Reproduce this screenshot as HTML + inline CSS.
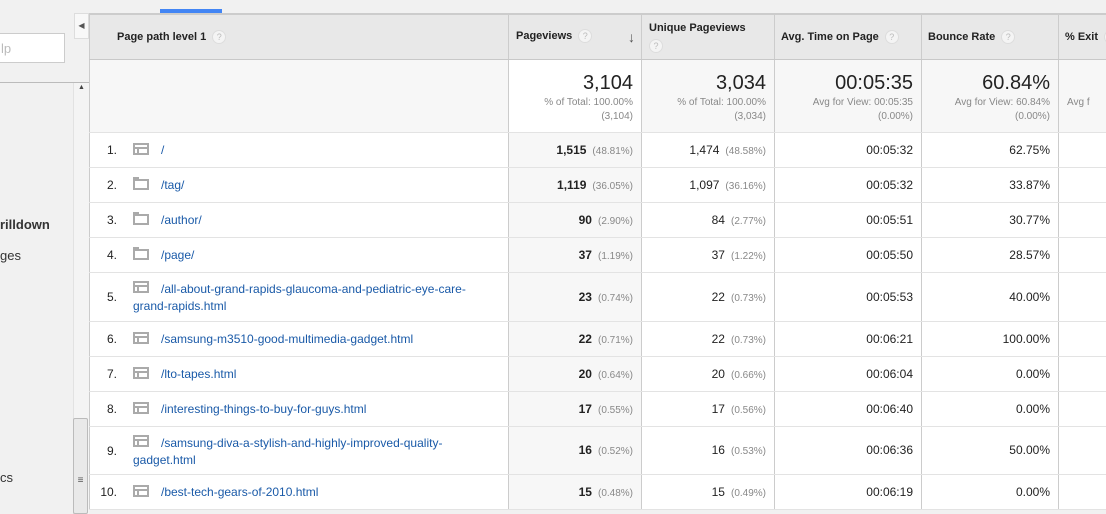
<!DOCTYPE html>
<html><head><meta charset="utf-8"><style>
*{margin:0;padding:0;box-sizing:border-box}
body{width:1106px;height:514px;overflow:hidden;background:#f1f1f1;font-family:"Liberation Sans",Arial,sans-serif;position:relative;color:#222}
.abs{position:absolute}
table{position:absolute;left:89px;top:13px;width:1029px;border-collapse:collapse;table-layout:fixed;background:#fff;font-size:12px}
td,th{border-left:1px solid #ccc;border-bottom:1px solid #e3e3e3;vertical-align:middle}
th{background:#e8e8e8;height:45px;font-size:11px;font-weight:bold;text-align:left;padding:0 6px;border-top:2px solid #ccc;border-bottom:1px solid #c8c8c8;color:#222;white-space:nowrap;overflow:hidden}
.q{display:inline-block;width:14px;height:14px;border-radius:50%;background:#f4f4f4;border:1px solid #ddd;color:#bbb;font-size:9px;text-align:center;line-height:12px;font-weight:normal;vertical-align:middle;margin-left:6px}
.sum td{height:73px;text-align:right;padding:0 8px;vertical-align:top;padding-top:11px}
.sum .big{font-size:20px;color:#222;line-height:24px}
.sum .sm{font-size:10px;color:#888;line-height:14px;margin-top:1px}
.r td{text-align:right;padding-right:8px;color:#222}
.r td.p{text-align:left;padding:0;vertical-align:top}
.w{position:relative;height:34px}
.n{position:absolute;left:0;width:27px;text-align:right}
.ic{position:absolute;left:43px;width:16px;height:12px;border:2px solid #aaa}
.ic.pg:after{content:"";position:absolute;left:0;top:2px;width:12px;height:0;border-top:2px solid #aaa}
.ic.pg:before{content:"";position:absolute;left:2px;top:2px;width:0;height:6px;border-left:2px solid #aaa}
.ic.fd{height:11px}
.ic.fd:before{content:"";position:absolute;left:-2px;top:-4px;width:6px;height:2px;background:#aaa}
.lk{color:#1a5aa8;position:absolute;left:71px;line-height:17px;white-space:nowrap}
.lk.wr{white-space:normal}
.pv{background:#f7f7f7}
.pct{color:#888;font-size:10px;margin-left:6px}
b{font-weight:bold}
</style></head><body>
<div class="abs" style="left:160px;top:9px;width:62px;height:4px;background:#4285f4"></div>
<div class="abs" style="left:-5px;top:33px;width:70px;height:30px;background:#fff;border:1px solid #ccc;color:#bbb;font-size:13px;padding:7px 0 0 5px">lp</div>
<div class="abs" style="left:0;top:82px;width:89px;height:1px;background:#bbb"></div>
<div class="abs" style="left:74px;top:13px;width:15px;height:26px;background:#f8f8f8;border:1px solid #ddd;font-size:8px;color:#555;text-align:center;line-height:24px">◀</div>
<div class="abs" style="left:73px;top:83px;width:16px;height:431px;background:#f4f4f4;border-left:1px solid #e2e2e2"></div>
<div class="abs" style="left:78px;top:84px;font-size:7px;color:#444">▲</div>
<div class="abs" style="left:73px;top:418px;width:15px;height:96px;background:#e9e9e9;border:1px solid #bbb;border-radius:2px;font-size:10px;color:#555;text-align:center;padding-top:56px">≡</div>
<div class="abs" style="left:0;top:217px;font-size:13px;font-weight:bold;color:#333">rilldown</div>
<div class="abs" style="left:0;top:248px;font-size:13px;color:#333">ges</div>
<div class="abs" style="left:0;top:470px;font-size:13px;color:#333">cs</div>
<table>
<colgroup><col style="width:419px"><col style="width:133px"><col style="width:133px"><col style="width:147px"><col style="width:137px"><col style="width:60px"></colgroup>
<tr><th style="padding-left:27px">Page path level 1<span class="q">?</span></th><th style="padding-left:7px">Pageviews<span class="q">?</span><span style="float:right;font-size:14px;color:#555">↓</span></th><th style="padding-left:7px;vertical-align:top;padding-top:6px;line-height:14px">Unique Pageviews<br><span class="q" style="margin:4px 0 0">?</span></th><th>Avg. Time on Page<span class="q">?</span></th><th>Bounce Rate<span class="q">?</span></th><th>% Exit<span class="q">?</span></th></tr>
<tr class="sum"><td style="background:#f7f7f7"></td><td><div class="big">3,104</div><div class="sm">% of Total: 100.00%<br>(3,104)</div></td><td style="background:#f7f7f7"><div class="big">3,034</div><div class="sm">% of Total: 100.00%<br>(3,034)</div></td><td style="background:#f7f7f7"><div class="big">00:05:35</div><div class="sm">Avg for View: 00:05:35<br>(0.00%)</div></td><td style="background:#f7f7f7"><div class="big">60.84%</div><div class="sm">Avg for View: 60.84%<br>(0.00%)</div></td><td style="background:#f7f7f7;text-align:left"><div class="big">&nbsp;</div><div class="sm">Avg f</div></td></tr>
<tr class="r" style="height:35px"><td class="p"><div class="w"><span class="n" style="top:10px">1.</span><span class="ic pg" style="top:10px"></span><span class="lk" style="top:9px">/</span></div></td><td class="pv"><b>1,515</b><span class="pct">(48.81%)</span></td><td>1,474<span class="pct">(48.58%)</span></td><td>00:05:32</td><td>62.75%</td><td></td></tr>
<tr class="r" style="height:35px"><td class="p"><div class="w"><span class="n" style="top:10px">2.</span><span class="ic fd" style="top:11px"></span><span class="lk" style="top:9px">/tag/</span></div></td><td class="pv"><b>1,119</b><span class="pct">(36.05%)</span></td><td>1,097<span class="pct">(36.16%)</span></td><td>00:05:32</td><td>33.87%</td><td></td></tr>
<tr class="r" style="height:35px"><td class="p"><div class="w"><span class="n" style="top:10px">3.</span><span class="ic fd" style="top:11px"></span><span class="lk" style="top:9px">/author/</span></div></td><td class="pv"><b>90</b><span class="pct">(2.90%)</span></td><td>84<span class="pct">(2.77%)</span></td><td>00:05:51</td><td>30.77%</td><td></td></tr>
<tr class="r" style="height:35px"><td class="p"><div class="w"><span class="n" style="top:10px">4.</span><span class="ic fd" style="top:11px"></span><span class="lk" style="top:9px">/page/</span></div></td><td class="pv"><b>37</b><span class="pct">(1.19%)</span></td><td>37<span class="pct">(1.22%)</span></td><td>00:05:50</td><td>28.57%</td><td></td></tr>
<tr class="r" style="height:49px"><td class="p"><div class="w" style="height:48px"><span class="n" style="top:17px">5.</span><span class="ic pg" style="top:8px"></span><span class="lk wr" style="top:8px;left:43px;text-indent:28px;width:355px">/all-about-grand-rapids-glaucoma-and-pediatric-eye-care-grand-rapids.html</span></div></td><td class="pv"><b>23</b><span class="pct">(0.74%)</span></td><td>22<span class="pct">(0.73%)</span></td><td>00:05:53</td><td>40.00%</td><td></td></tr>
<tr class="r" style="height:35px"><td class="p"><div class="w"><span class="n" style="top:10px">6.</span><span class="ic pg" style="top:10px"></span><span class="lk" style="top:9px">/samsung-m3510-good-multimedia-gadget.html</span></div></td><td class="pv"><b>22</b><span class="pct">(0.71%)</span></td><td>22<span class="pct">(0.73%)</span></td><td>00:06:21</td><td>100.00%</td><td></td></tr>
<tr class="r" style="height:35px"><td class="p"><div class="w"><span class="n" style="top:10px">7.</span><span class="ic pg" style="top:10px"></span><span class="lk" style="top:9px">/lto-tapes.html</span></div></td><td class="pv"><b>20</b><span class="pct">(0.64%)</span></td><td>20<span class="pct">(0.66%)</span></td><td>00:06:04</td><td>0.00%</td><td></td></tr>
<tr class="r" style="height:35px"><td class="p"><div class="w"><span class="n" style="top:10px">8.</span><span class="ic pg" style="top:10px"></span><span class="lk" style="top:9px">/interesting-things-to-buy-for-guys.html</span></div></td><td class="pv"><b>17</b><span class="pct">(0.55%)</span></td><td>17<span class="pct">(0.56%)</span></td><td>00:06:40</td><td>0.00%</td><td></td></tr>
<tr class="r" style="height:48px"><td class="p"><div class="w" style="height:47px"><span class="n" style="top:17px">9.</span><span class="ic pg" style="top:8px"></span><span class="lk wr" style="top:8px;left:43px;text-indent:28px;width:355px">/samsung-diva-a-stylish-and-highly-improved-quality-gadget.html</span></div></td><td class="pv"><b>16</b><span class="pct">(0.52%)</span></td><td>16<span class="pct">(0.53%)</span></td><td>00:06:36</td><td>50.00%</td><td></td></tr>
<tr class="r" style="height:35px"><td class="p"><div class="w"><span class="n" style="top:10px">10.</span><span class="ic pg" style="top:10px"></span><span class="lk" style="top:9px">/best-tech-gears-of-2010.html</span></div></td><td class="pv"><b>15</b><span class="pct">(0.48%)</span></td><td>15<span class="pct">(0.49%)</span></td><td>00:06:19</td><td>0.00%</td><td></td></tr>
</table>
</body></html>
